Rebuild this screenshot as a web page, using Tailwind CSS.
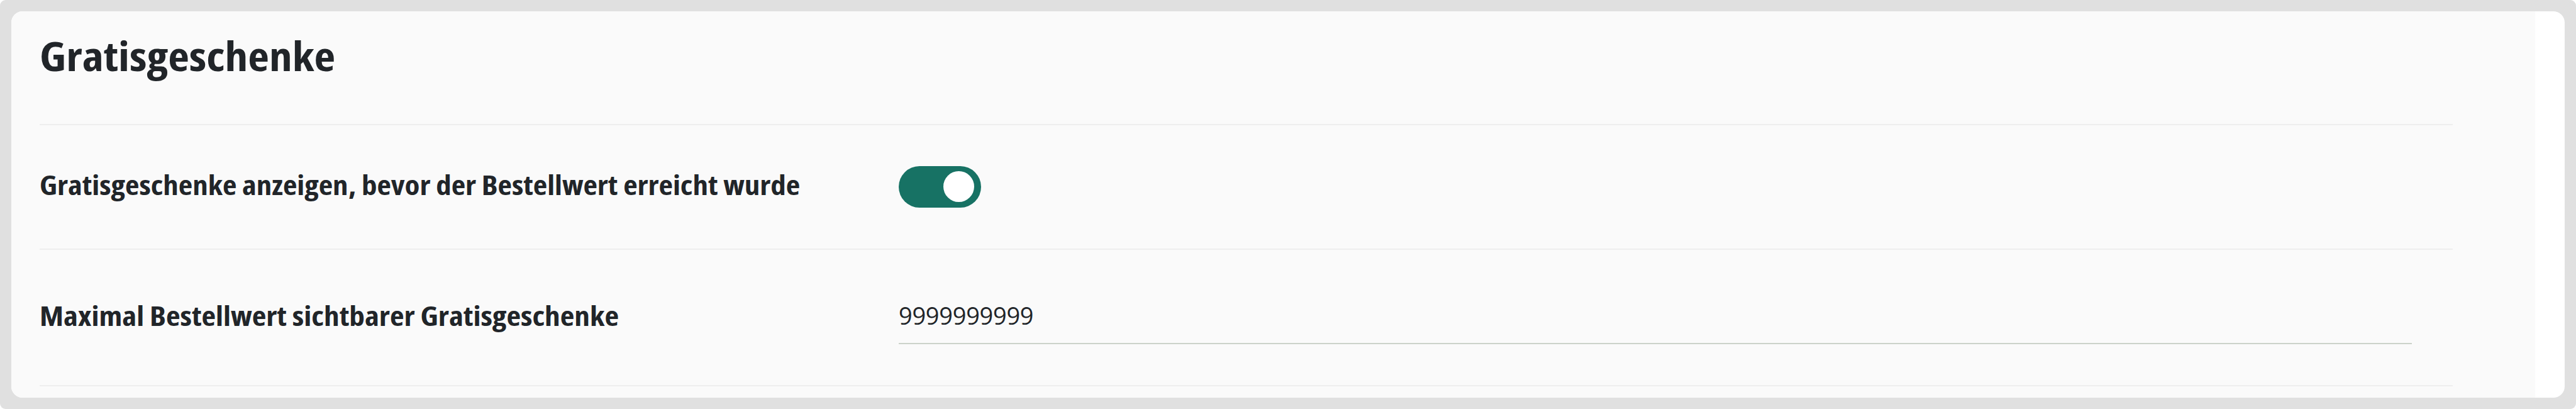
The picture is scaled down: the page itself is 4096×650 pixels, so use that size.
<html lang="de">
  <head>
    <meta charset="utf-8" />
    <meta content="width=device-width, initial-scale=1.0" name="viewport" />
    <title>Gratisgeschenke</title>
    <script src="https://cdn.jsdelivr.net/npm/@tailwindcss/browser@4"></script>
  </head>
  <body class="bg-white text-[#212529] font-['Open_Sans',sans-serif]">
    <div class="h-[650px] p-[18px] bg-[#e0e0e0] rounded-[9px]">
      <main class="h-full bg-white rounded-[18px] overflow-hidden">
        <section class="w-[4013px] h-full pl-[45px] pr-[131px] bg-[#fafafa]">
          <header class="h-[181px] pt-[31px] border-b-2 border-[#eeeeee]">
            <h1 class="text-[64px] leading-[80px] font-bold font-stretch-condensed">
              <span class="inline-block origin-left scale-x-[1.148]">Gratisgeschenke</span>
            </h1>
          </header>

          <div class="h-[198px] flex items-start border-b-2 border-[#eeeeee]">
            <label
              for="show-gifts"
              class="w-[1366px] pt-[65px] text-[42.67px] leading-[60px] font-bold font-stretch-condensed whitespace-nowrap"
            >
              <span class="inline-block origin-left scale-x-[1.148]">Gratisgeschenke anzeigen, bevor der Bestellwert erreicht wurde</span>
            </label>
            <button
              id="show-gifts"
              role="switch"
              aria-checked="true"
              class="mt-[65px] w-[131px] h-[66px] pt-[8px] pr-[11px] flex justify-end items-start rounded-full bg-[#177264]"
            >
              <span class="size-[49px] rounded-full bg-white"></span>
            </button>
          </div>

          <div class="h-[217px] flex items-start border-b-2 border-[#eeeeee]">
            <label
              for="max-value"
              class="w-[1366px] pt-[75px] text-[42.67px] leading-[60px] font-bold font-stretch-condensed whitespace-nowrap"
            >
              <span class="inline-block origin-left scale-x-[1.156]">Maximal Bestellwert sichtbarer Gratisgeschenke</span>
            </label>
            <input
              id="max-value"
              type="text"
              value="9999999999"
              class="mt-[64px] w-[2406px] h-[86px] pb-[4px] text-[38px] tracking-[-0.3px] border-b-2 border-[#ccd3ca] outline-none"
            />
          </div>
        </section>
      </main>
    </div>
  </body>
</html>
